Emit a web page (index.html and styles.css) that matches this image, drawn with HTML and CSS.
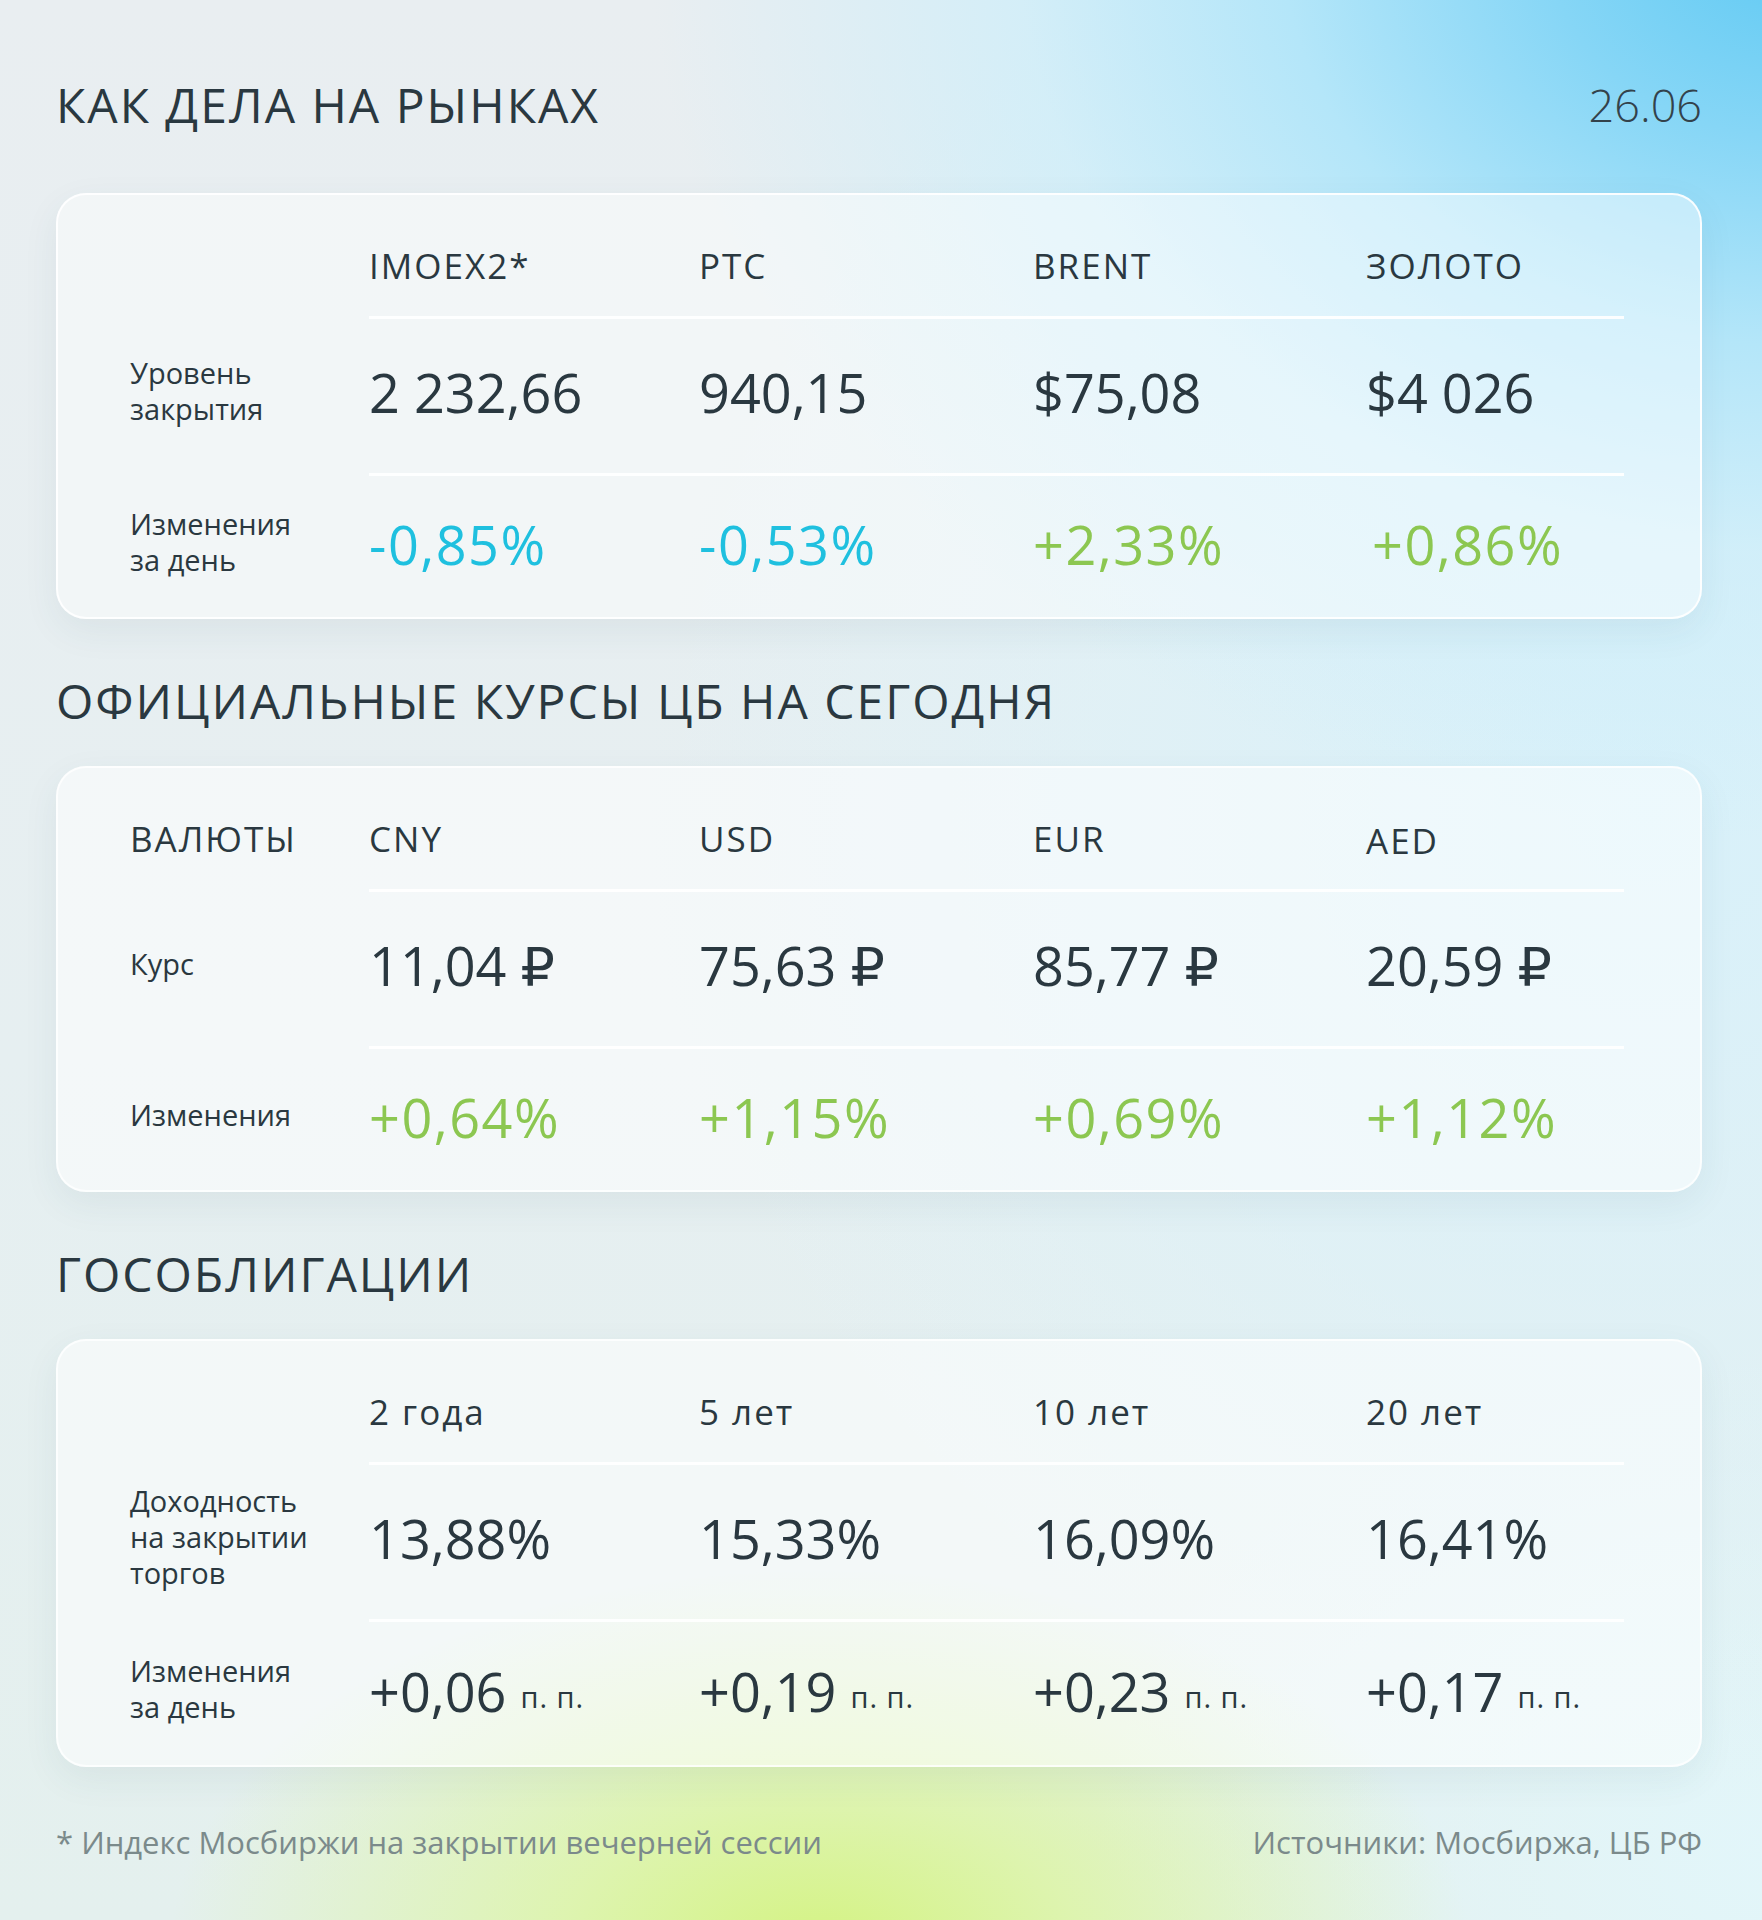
FILE: index.html
```html
<!DOCTYPE html>
<html lang="ru">
<head>
<meta charset="utf-8">
<title>Как дела на рынках</title>
<link rel="stylesheet" href="styles.css">
</head>
<body>
<main class="page">
  <header class="top">
    <h1 class="section-title">КАК ДЕЛА НА РЫНКАХ</h1>
    <div class="date">26.06</div>
  </header>

  <section class="card card-markets">
    <div class="cell label"></div>
    <div class="cell head">IMOEX2*</div>
    <div class="cell head">РТС</div>
    <div class="cell head">BRENT</div>
    <div class="cell head">ЗОЛОТО</div>

    <div class="cell label row-value">Уровень<br>закрытия</div>
    <div class="cell value row-value line">2 232,66</div>
    <div class="cell value row-value line">940,15</div>
    <div class="cell value row-value line">$75,08</div>
    <div class="cell value row-value line">$4 026</div>

    <div class="cell label row-change">Изменения<br>за день</div>
    <div class="cell value row-change line neg">-0,85%</div>
    <div class="cell value row-change line neg">-0,53%</div>
    <div class="cell value row-change line pos">+2,33%</div>
    <div class="cell value row-change line pos shift">+0,86%</div>
  </section>

  <h2 class="section-title sub">ОФИЦИАЛЬНЫЕ КУРСЫ ЦБ НА СЕГОДНЯ</h2>

  <section class="card card-fx">
    <div class="cell head">ВАЛЮТЫ</div>
    <div class="cell head">CNY</div>
    <div class="cell head">USD</div>
    <div class="cell head">EUR</div>
    <div class="cell head low">AED</div>

    <div class="cell label row-value">Курс</div>
    <div class="cell value row-value line">11,04 ₽</div>
    <div class="cell value row-value line">75,63 ₽</div>
    <div class="cell value row-value line">85,77 ₽</div>
    <div class="cell value row-value line">20,59 ₽</div>

    <div class="cell label row-change">Изменения</div>
    <div class="cell value row-change line pos">+0,64%</div>
    <div class="cell value row-change line pos">+1,15%</div>
    <div class="cell value row-change line pos">+0,69%</div>
    <div class="cell value row-change line pos">+1,12%</div>
  </section>

  <h2 class="section-title sub">ГОСОБЛИГАЦИИ</h2>

  <section class="card card-bonds">
    <div class="cell label"></div>
    <div class="cell head">2 года</div>
    <div class="cell head">5 лет</div>
    <div class="cell head">10 лет</div>
    <div class="cell head">20 лет</div>

    <div class="cell label row-value">Доходность<br>на закрытии<br>торгов</div>
    <div class="cell value row-value line">13,88%</div>
    <div class="cell value row-value line">15,33%</div>
    <div class="cell value row-value line">16,09%</div>
    <div class="cell value row-value line">16,41%</div>

    <div class="cell label row-change">Изменения<br>за день</div>
    <div class="cell value row-change line">+0,06<span class="unit">п. п.</span></div>
    <div class="cell value row-change line">+0,19<span class="unit">п. п.</span></div>
    <div class="cell value row-change line">+0,23<span class="unit">п. п.</span></div>
    <div class="cell value row-change line">+0,17<span class="unit">п. п.</span></div>
  </section>

  <footer class="foot">
    <span>* Индекс Мосбиржи на закрытии вечерней сессии</span>
    <span>Источники: Мосбиржа, ЦБ РФ</span>
  </footer>
</main>
</body>
</html>
```

FILE: styles.css
```css
* {
  box-sizing: border-box;
}

html, body {
  margin: 0;
  padding: 0;
}

body {
  width: 1762px;
  min-height: 1920px;
  font-family: "Open Sans", "DejaVu Sans", sans-serif;
  color: #2a3840;
  background:
    radial-gradient(ellipse 1150px 900px at 1800px -60px, #5ec9f3 0%, #86d6f6 22%, #b4e6f9 45%, rgba(205, 238, 250, 0.75) 68%, rgba(220, 242, 250, 0) 100%),
    radial-gradient(ellipse 1000px 1000px at 1650px 800px, rgba(214, 241, 251, 0.9) 0%, rgba(218, 242, 250, 0.5) 55%, rgba(225, 240, 245, 0) 100%),
    radial-gradient(ellipse 650px 380px at 820px 1950px, rgba(212, 243, 130, 1) 0%, rgba(220, 245, 160, 0.8) 40%, rgba(226, 244, 205, 0) 100%),
    radial-gradient(ellipse 700px 500px at 1780px 1850px, rgba(226, 246, 250, 1) 0%, rgba(226, 246, 250, 0) 100%),
    linear-gradient(180deg, #e9eef1 0%, #e6eff1 55%, #e4f0ee 100%);
}

.page {
  padding: 0 60px 0 56px;
}

.top {
  display: flex;
  justify-content: space-between;
  align-items: center;
  height: 60px;
  margin-top: 75px;
  margin-bottom: 58px;
}

.section-title {
  margin: 0;
  font-size: 48px;
  font-weight: 400;
  line-height: 60px;
  letter-spacing: 2px;
  color: #2a3840;
}

.section-title.sub {
  margin: 52px 0 35px;
}

.date {
  font-size: 45px;
  font-weight: 300;
  line-height: 60px;
  color: #33424b;
}

.card {
  display: grid;
  grid-template-columns: 239px 330px 334px 333px 1fr;
  grid-template-rows: 101px 157px 138px;
  padding: 20px 76px 6px 72px;
  border-radius: 30px;
  background: rgba(255, 255, 255, 0.45);
  border: 2px solid rgba(255, 255, 255, 0.9);
  box-shadow: 0 12px 36px rgba(40, 80, 100, 0.07);
}

.card-fx,
.card-bonds {
  background: rgba(255, 255, 255, 0.55);
  border-color: rgba(255, 255, 255, 0.75);
}

.card-bonds {
  grid-template-rows: 101px 157px 140px;
}

.cell {
  display: flex;
  align-items: center;
  white-space: nowrap;
}

.line {
  border-top: 3px solid rgba(255, 255, 255, 0.92);
}

.head {
  font-size: 35px;
  letter-spacing: 2px;
  color: #2a3840;
}

.head.low {
  padding-top: 4px;
}

.label {
  font-size: 29px;
  line-height: 36px;
  color: #2a3840;
}

.value {
  font-size: 54px;
  color: #2a3840;
}

.row-value {
  padding-bottom: 8px;
}

.neg,
.pos {
  letter-spacing: 1.5px;
}

.neg {
  color: #1fc0df;
}

.pos {
  color: #8cc751;
}

.shift {
  padding-left: 6px;
}

.unit {
  font-size: 29px;
  margin-left: 14px;
  padding-top: 12px;
  letter-spacing: 1px;
}

.foot {
  display: flex;
  justify-content: space-between;
  align-items: center;
  height: 40px;
  margin-top: 55px;
  font-size: 31px;
  color: #7b8a8b;
}
```
